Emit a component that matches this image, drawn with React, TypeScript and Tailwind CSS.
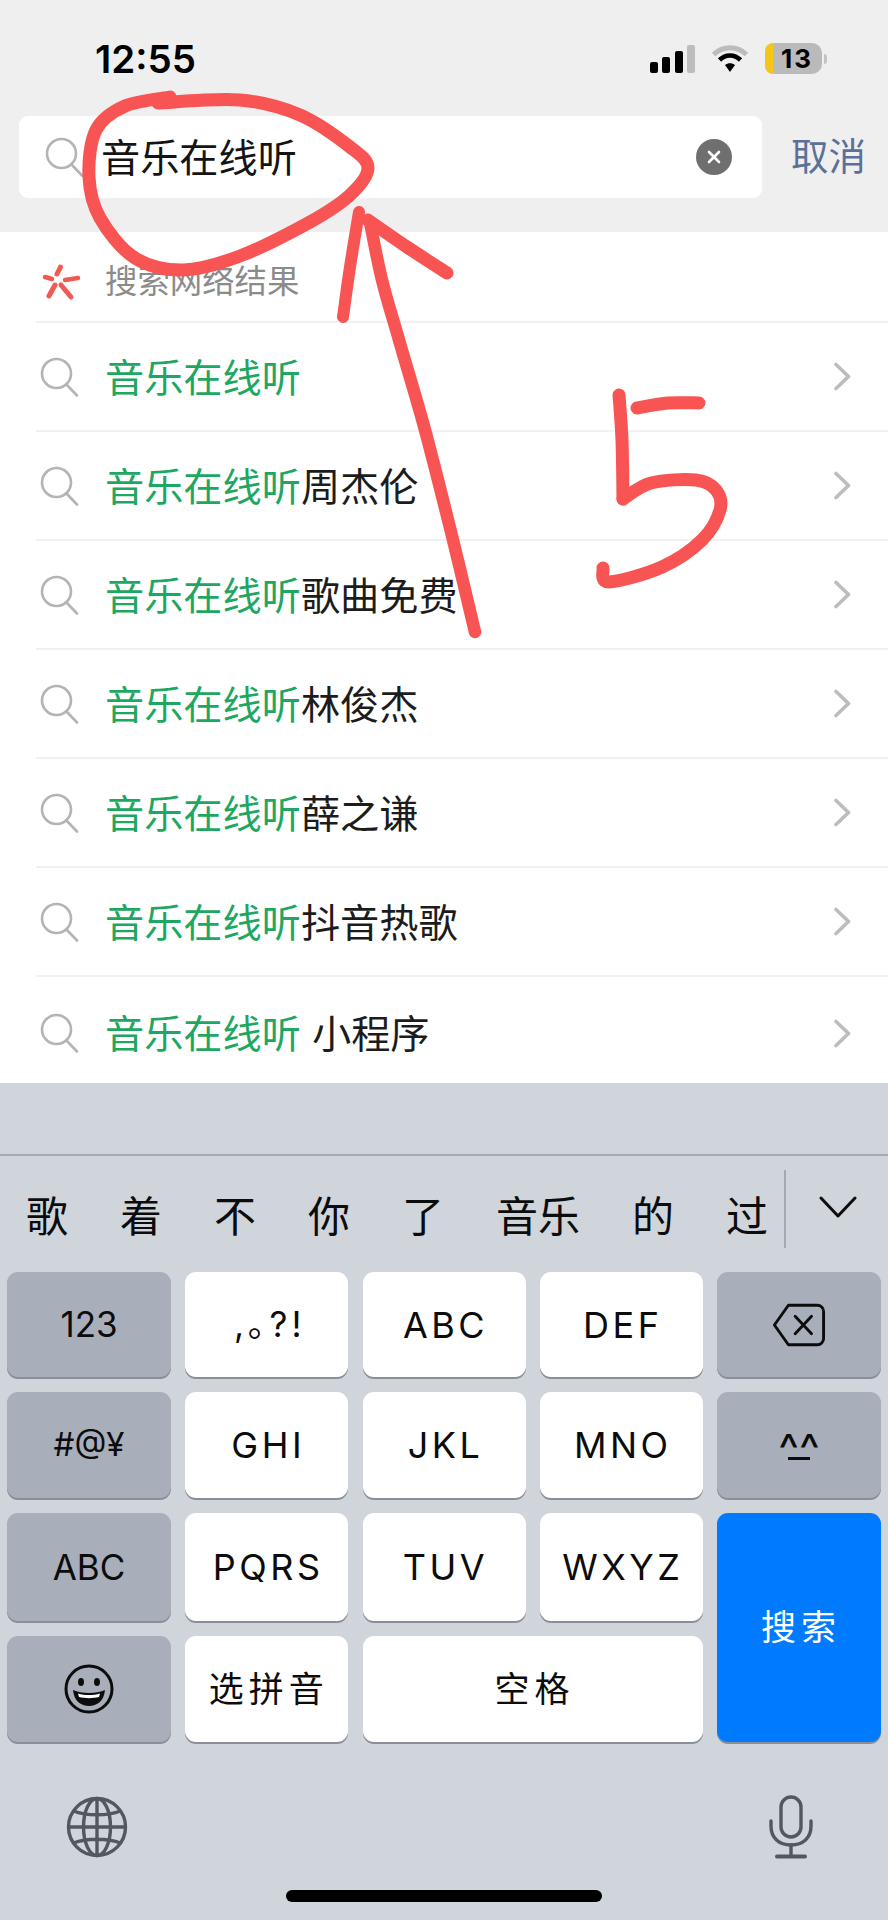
const FONT = '"Inter","Noto Sans CJK SC",sans-serif';

type P = [number, number];

function smooth(pts: P[]): string {
  let d = `M${pts[0][0]} ${pts[0][1]}`;
  for (let i = 0; i < pts.length - 1; i++) {
    const p0 = pts[Math.max(i - 1, 0)];
    const p1 = pts[i];
    const p2 = pts[i + 1];
    const p3 = pts[Math.min(i + 2, pts.length - 1)];
    const c1x = p1[0] + (p2[0] - p0[0]) / 6;
    const c1y = p1[1] + (p2[1] - p0[1]) / 6;
    const c2x = p2[0] - (p3[0] - p1[0]) / 6;
    const c2y = p2[1] - (p3[1] - p1[1]) / 6;
    d += ` C${c1x} ${c1y} ${c2x} ${c2y} ${p2[0]} ${p2[1]}`;
  }
  return d;
}

const LOOP: P[] = [
  [170, 97], [125, 106], [96, 130], [89, 177], [100, 218], [135, 258], [183, 270], [240, 256], [310, 222], [350, 195], [368, 168], [350, 147], [300, 115], [240, 100], [158, 103],
];
const SHAFT_A: P[] = [[343, 317], [350, 267], [359, 212]];
const HEAD: P[] = [[368, 220], [407, 247], [447, 273]];
const SHAFT_B: P[] = [[370, 222], [382, 280], [399, 340], [425, 430], [453, 540], [475, 632]];
const FIVE_A: P[] = [[619, 395], [622, 440], [623, 499]];
const FIVE_B: P[] = [[623, 499], [651, 483], [696, 480], [716, 490], [720, 510], [702, 540], [662, 567], [609, 582], [603, 568]];
const FIVE_TOP: P[] = [[637, 408], [668, 403], [699, 403]];

function SearchIcon({ className = "" }: { className?: string }) {
  return (
    <svg width="40" height="40" viewBox="0 0 40 40" fill="none" stroke="#b4b4b4" strokeWidth="2.6" strokeLinecap="round" className={className}>
      <circle cx="16.5" cy="16.5" r="14.5" />
      <path d="M26.5 27.5 L37 38.5" />
    </svg>
  );
}

function Chevron() {
  return (
    <svg width="19" height="29" viewBox="0 0 19 29" fill="none" stroke="#bcbcbc" strokeWidth="3.6" strokeLinecap="round" strokeLinejoin="round">
      <path d="M3 2.5 L15.5 14.5 L3 26.5" />
    </svg>
  );
}

function Row({ black, last }: { black: string; last?: boolean }) {
  return (
    <div className={last ? "h-[106px] pt-[6px] flex items-center" : "h-[109px] flex items-center border-b-2 border-[#f1f1f1]"}>
      <SearchIcon className="ml-[4px] shrink-0" />
      <div className="ml-[25px] mt-[2px] text-[39.2px] leading-[48px] whitespace-pre text-[#1c1c1c]">
        <span className="text-[#1ea760]">音乐在线听</span>
        {black}
      </div>
      <div className="ml-auto mr-[36px] flex">
        <Chevron />
      </div>
    </div>
  );
}

const grayKey = "bg-[#a9afba] shadow-[0_2px_0_#8a8e96] rounded-[11px] flex items-center justify-center text-[#0c0c0c]";
const whiteKey = "bg-white shadow-[0_2px_0_#8a8e96] rounded-[11px] flex items-center justify-center text-[#0c0c0c]";

function Letters({ t }: { t: string }) {
  return <div className={whiteKey + " text-[36px] tracking-[3.5px] pl-[3px]"}>{t}</div>;
}

function Cjk({ t }: { t: string }) {
  return <div className={whiteKey + " text-[35px] tracking-[5px] pl-[4px]"}>{t}</div>;
}

export default function App() {
  return (
    <div className="relative w-[888px] h-[1920px] overflow-hidden bg-white" style={{ fontFamily: FONT }}>
      <div className="h-[232px] bg-[#efefef]">
        <div className="h-[116px] pl-[95px] pt-[38px] flex items-start">
          <div className="text-[38.5px] leading-[42px] font-semibold text-black">12:55</div>
          <svg className="ml-[454px] mt-[7px]" width="45" height="28" viewBox="0 0 45 28">
            <rect x="0" y="17" width="8" height="11" rx="2" fill="#000" />
            <rect x="12" y="12" width="8" height="16" rx="2" fill="#000" />
            <rect x="25" y="6" width="8" height="22" rx="2" fill="#000" />
            <rect x="37" y="0" width="8" height="28" rx="2" fill="#bdbdbd" />
          </svg>
          <svg className="ml-[16px] mt-[7px]" width="38" height="28" viewBox="0 0 38 28" fill="none">
            <path d="M2.5 9.5 C12 0.5 26 0.5 35.5 9.5" stroke="#bcbcbc" strokeWidth="5" />
            <path d="M8.5 15 C14.5 9 23.5 9 29.5 15" stroke="#000" strokeWidth="4.6" />
            <path d="M14 20 C17 17.5 21 17.5 24 20 L19 27 Z" fill="#000" />
          </svg>
          <div className="ml-[16px] mt-[5px] flex items-center">
            <div className="w-[57px] h-[31px] rounded-[10px] bg-[#bababa] flex items-center">
              <div className="w-[8px] h-[31px] rounded-l-[10px] bg-[#f5c518]" />
              <span className="ml-[8px] text-[26px] leading-[31px] font-bold tracking-[2px] text-black">13</span>
            </div>
            <div className="ml-[2px] w-[3px] h-[10px] rounded-r-[3px] bg-[#c4c4c4]" />
          </div>
        </div>
        <div className="flex items-center pl-[19px]">
          <div className="w-[743px] h-[82px] bg-white rounded-[9px] flex items-center">
            <SearchIcon className="ml-[26px] shrink-0" />
            <div className="ml-[16px] mt-[1px] text-[39.2px] leading-[48px] text-[#141414]">音乐在线听</div>
            <div className="ml-auto mr-[30px] w-[36px] h-[36px] rounded-full bg-[#6f6f6f] flex items-center justify-center">
              <svg width="16" height="16" viewBox="0 0 16 16" stroke="#fff" strokeWidth="2.6" strokeLinecap="round">
                <path d="M3 3 L13 13 M13 3 L3 13" />
              </svg>
            </div>
          </div>
          <div className="ml-[29px] text-[37.5px] leading-[48px] text-[#5b7099]">取消</div>
        </div>
      </div>

      <div className="ml-[36px]">
        <div className="h-[91px] pt-[10px] flex items-center border-b-2 border-[#f1f1f1]">
          <svg className="ml-[4px] shrink-0" width="44" height="42" viewBox="40 260 44 42" fill="none" stroke="#ef5a52" strokeLinecap="round">
            <path d="M60.5 266 L57 273" strokeWidth="5" />
            <path d="M78 277 L65 279" strokeWidth="4.5" />
            <path d="M61 284 L71 296" strokeWidth="5" />
            <path d="M55 284 L49 295" strokeWidth="5" />
            <path d="M45 276 L52 278" strokeWidth="4.5" />
          </svg>
          <div className="ml-[21px] text-[32.4px] leading-[40px] text-[#8b8b8b]">搜索网络结果</div>
        </div>
        <Row black="" />
        <Row black="周杰伦" />
        <Row black="歌曲免费" />
        <Row black="林俊杰" />
        <Row black="薛之谦" />
        <Row black="抖音热歌" />
        <Row black=" 小程序" last />
      </div>

      <div className="h-[837px] bg-[#d0d4db]">
        <div className="h-[73px] border-b-2 border-[#a6a9b1]" />
        <div className="h-[116px] flex items-start pl-[26px] text-[42px] leading-[48px] text-[#0c0c0c]">
          <div className="mt-[37px] flex gap-[52px]">
            <span>歌</span>
            <span>着</span>
            <span>不</span>
            <span>你</span>
            <span>了</span>
            <span>音乐</span>
            <span>的</span>
            <span>过</span>
          </div>
          <div className="ml-[16px] mt-[14px] w-[2px] h-[78px] bg-[#a6a9b1]" />
          <svg className="ml-[33px] mt-[39px]" width="38" height="24" viewBox="0 0 38 24" fill="none" stroke="#0c0c0c" strokeWidth="3" strokeLinecap="round" strokeLinejoin="round">
            <path d="M2 3 L19 21 L36 3" />
          </svg>
        </div>

        <div className="px-[7px] grid grid-cols-[164px_163px_163px_163px_164px] gap-x-[14.25px] gap-y-[15px] grid-rows-[105px_106px_108px_106px]">
          <div className={grayKey + " text-[35px]"}>123</div>
          <div className={whiteKey + " text-[35px] tracking-[4px] pl-[6px]"}>,｡?!</div>
          <Letters t="ABC" />
          <Letters t="DEF" />
          <div className={grayKey}>
            <svg width="54" height="46" viewBox="0 0 56 46" fill="none" stroke="#0c0c0c" strokeWidth="3" strokeLinejoin="round" strokeLinecap="round">
              <path d="M17 2.5 H47 A6.5 6.5 0 0 1 53.5 9 V37 A6.5 6.5 0 0 1 47 43.5 H17 L2.5 23 Z" />
              <path d="M24 14 L41 32 M41 14 L24 32" />
            </svg>
          </div>

          <div className={grayKey + " text-[33px]"}>#@¥</div>
          <Letters t="GHI" />
          <Letters t="JKL" />
          <Letters t="MNO" />
          <div className={grayKey + " flex-col"}>
            <span className="text-[44px] leading-[36px] h-[24px]">^^</span>
            <span className="w-[22px] h-[3px] mt-[2px] bg-[#0c0c0c]" />
          </div>

          <div className={grayKey + " text-[35px]"}>ABC</div>
          <Letters t="PQRS" />
          <Letters t="TUV" />
          <Letters t="WXYZ" />
          <div className="row-span-2 bg-[#007aff] shadow-[0_2px_0_#8a8e96] rounded-[11px] flex items-center justify-center text-white text-[35px] tracking-[5px] pl-[4px]">搜索</div>

          <div className={grayKey}>
            <svg width="50" height="50" viewBox="0 0 50 50" fill="none">
              <circle cx="25" cy="25" r="23" stroke="#0c0c0c" strokeWidth="3" />
              <ellipse cx="17" cy="18" rx="3" ry="4" fill="#0c0c0c" />
              <ellipse cx="33" cy="18" rx="3" ry="4" fill="#0c0c0c" />
              <path d="M9 26 C17 30 33 30 41 26 C40 37 33 42 25 42 C17 42 10 37 9 26 Z" fill="#0c0c0c" />
              <path d="M14 29.5 C21 31.5 29 31.5 36 29.5 L35 33 C29 34.5 21 34.5 15 33 Z" fill="#fff" />
            </svg>
          </div>
          <Cjk t="选拼音" />
          <div className={whiteKey + " col-span-2 text-[35px] tracking-[5px] pl-[4px]"}>空格</div>
        </div>

        <div className="pl-[66px] pr-[75px] pt-[53px] h-[117px] flex justify-between items-center">
          <svg width="62" height="62" viewBox="0 0 62 62" fill="none" stroke="#53575e" strokeWidth="3.4">
            <circle cx="31" cy="31" r="28.5" />
            <ellipse cx="31" cy="31" rx="13.5" ry="28.5" />
            <path d="M31 2.5 V59.5 M2.5 31 H59.5 M7.5 15 C20 20 42 20 54.5 15 M7.5 47 C20 42 42 42 54.5 47" />
          </svg>
          <svg width="44" height="64" viewBox="0 0 44 64" fill="none" stroke="#53575e" strokeWidth="3.4" strokeLinecap="round">
            <rect x="12" y="2" width="20" height="40" rx="10" />
            <path d="M2 26 V31 C2 43 10 50 22 50 C34 50 42 43 42 31 V26" />
            <path d="M22 50 V61" />
            <path d="M8 61.5 H36" strokeWidth="4" />
          </svg>
        </div>
        <div className="mt-[31px] mx-auto w-[316px] h-[12px] rounded-full bg-black" />
      </div>

      <svg className="absolute left-0 top-0 pointer-events-none" width="888" height="1920" viewBox="0 0 888 1920" fill="none" stroke="#f95454" strokeLinecap="round" strokeLinejoin="round">
        <path d={smooth(LOOP)} strokeWidth="13" />
        <path d={smooth(SHAFT_A)} strokeWidth="12" />
        <path d={smooth(HEAD)} strokeWidth="13" />
        <path d={smooth(SHAFT_B)} strokeWidth="12.5" />
        <path d={smooth(FIVE_A)} strokeWidth="13" />
        <path d={smooth(FIVE_B)} strokeWidth="13" />
        <path d={smooth(FIVE_TOP)} strokeWidth="13" />
      </svg>
    </div>
  );
}
